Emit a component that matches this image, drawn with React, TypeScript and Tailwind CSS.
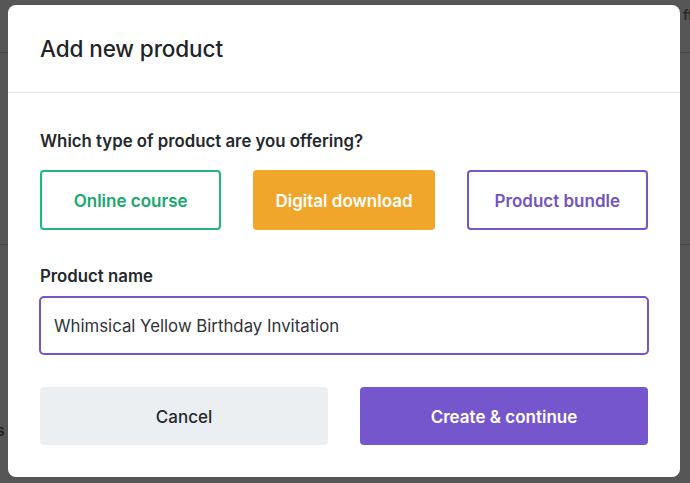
import React from "react";

export default function App() {
  return (
    <div
      className="relative w-[690px] h-[483px] overflow-hidden bg-[#565656]"
      style={{ fontFamily: "Inter, 'Noto Sans', sans-serif" }}
    >
      {/* faint background page lines behind overlay */}
      <div className="absolute left-0 right-0 top-[52px] h-px bg-[#4a4a4a]" />
      <div className="absolute left-0 right-0 top-[244px] h-px bg-[#4a4a4a]" />
      <div className="absolute left-[683px] top-[4px] text-[14px] text-[#2a2a2a] font-semibold">ffi</div>
      <div className="absolute left-[-4px] top-[418px] text-[16px] text-[#222] font-semibold">s</div>

      <div className="absolute left-[8px] top-[5px] w-[672px] h-[472px] bg-white rounded-[8px] flex flex-col">
        <div className="h-[88px] px-8 flex items-center border-b border-[#e3eaea]">
          <h1 className="text-[22.5px] font-medium text-[#1f2429] tracking-[-0.1px]">Add new product</h1>
        </div>
        <div className="px-8 pt-9 pb-8 flex flex-col">
          <div className="text-[16.8px] leading-6 font-semibold text-[#24292e]">
            Which type of product are you offering?
          </div>
          <div className="mt-[17px] grid grid-cols-3 gap-8">
            <button className="h-[60px] pt-[3px] rounded-[4px] border-2 border-[#1db87a] bg-white text-[#17a86c] text-[17px] font-semibold">
              Online course
            </button>
            <button className="h-[60px] pt-[3px] rounded-[4px] border-2 border-[#f0a62a] bg-[#f0a62a] text-white text-[17px] font-semibold">
              Digital download
            </button>
            <button className="h-[60px] pt-[3px] rounded-[4px] border-2 border-[#7755c9] bg-white text-[#7253c4] text-[17px] font-semibold">
              Product bundle
            </button>
          </div>
          <div className="mt-[34px] text-[16.8px] leading-6 font-semibold text-[#24292e]">Product name</div>
          <div className="mt-[8px] h-[59px] pt-[3px] -mx-px rounded-[5px] border-2 border-[#7755c9] flex items-center px-[13px] text-[16.8px] text-[#2f3338]">
            Whimsical Yellow Birthday Invitation
          </div>
          <div className="mt-8 grid grid-cols-2 gap-8">
            <button className="h-[58px] pt-[3px] rounded-[4px] bg-[#ebeff2] text-[#24292e] text-[17px] font-medium">
              Cancel
            </button>
            <button className="h-[58px] pt-[3px] rounded-[4px] bg-[#7656cd] text-white text-[17px] font-semibold">
              Create &amp; continue
            </button>
          </div>
        </div>
      </div>
    </div>
  );
}
